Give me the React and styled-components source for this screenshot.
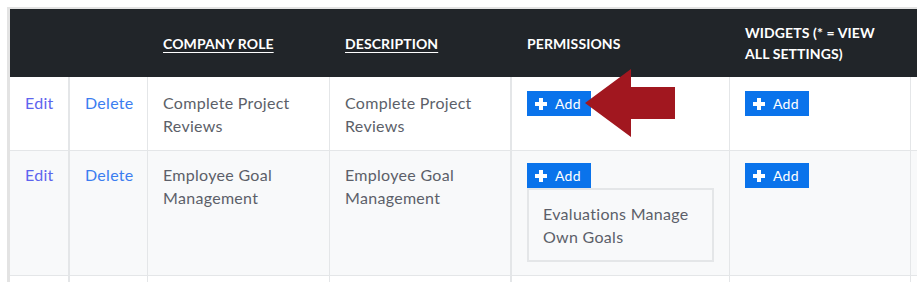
import styled, { createGlobalStyle } from "styled-components";

const GlobalStyle = createGlobalStyle`
  html, body {
    margin: 0;
    background: #ffffff;
  }
  body {
    font-family: "Lato", "Liberation Sans", sans-serif;
  }
`;

const Page = styled.div`
  position: relative;
  width: 917px;
  height: 282px;
  overflow: hidden;
`;

const Frame = styled.div`
  margin: 7px 0 0 7px;
  border-top: 2px solid #e3e3e3;
  border-left: 3px solid #e3e3e3;
  overflow: hidden;
`;

const Table = styled.table`
  width: 1100px;
  table-layout: fixed;
  border-collapse: separate;
  border-spacing: 0;
  font-size: 16px;
  line-height: 23px;
  letter-spacing: 0.3px;
  color: #5c5f69;
`;

const HeadCell = styled.th`
  background: #212529;
  color: #ffffff;
  text-align: left;
  vertical-align: middle;
  padding: 13px 15px;
  font-size: 14px;
  line-height: 21px;
  font-weight: 700;
  letter-spacing: 0.1px;
  text-transform: uppercase;

  a {
    color: #ffffff;
    text-decoration: underline;
    text-underline-offset: 3px;
  }
`;

const Row = styled.tr`
  background: ${(p) => (p.$shaded ? "#f8f9fa" : "#ffffff")};

  &:first-child td {
    padding-top: 14px;
  }
`;

const Cell = styled.td`
  vertical-align: top;
  padding: 12px 15px 13px;
  border-right: ${(p) => (p.$thick ? 2 : 1)}px solid #e4e6e8;
  border-bottom: 1px solid #e4e6e8;
`;

const ActionLink = styled.a`
  color: ${(p) => (p.$edit ? "#5d64ee" : "#3b7df0")};
  text-decoration: none;
  cursor: pointer;
`;

const AddButton = styled.button`
  display: inline-flex;
  align-items: center;
  gap: 8px;
  height: 25px;
  padding: 0 10px 0 8px;
  border: none;
  border-radius: 0;
  background: #0a73eb;
  color: #ffffff;
  font-family: inherit;
  font-size: 14px;
  letter-spacing: 0.3px;
  cursor: pointer;
`;

const PermissionBox = styled.div`
  border: 2px solid #e4e6e8;
  padding: 12px 14px;
`;

const Arrow = styled.svg`
  position: absolute;
  left: 585px;
  top: 69px;
`;

const PlusIcon = () => (
  <svg width="12" height="12" viewBox="0 0 12 12">
    <path d="M4 0h4v4h4v4H8v4H4V8H0V4h4z" fill="#fff" />
  </svg>
);

const Add = () => (
  <AddButton>
    <PlusIcon />
    Add
  </AddButton>
);

const rows = [
  { role: "Complete Project Reviews", desc: "Complete Project Reviews", perms: [] },
  { role: "Employee Goal Management", desc: "Employee Goal Management", perms: ["Evaluations Manage Own Goals"] },
];

export default function App() {
  return (
    <Page>
      <GlobalStyle />
      <Frame>
        <Table>
          <colgroup>
            <col style={{ width: 60 }} />
            <col style={{ width: 78 }} />
            <col style={{ width: 182 }} />
            <col style={{ width: 182 }} />
            <col style={{ width: 218 }} />
            <col style={{ width: 181 }} />
            <col />
          </colgroup>
          <thead>
            <tr>
              <HeadCell />
              <HeadCell />
              <HeadCell><a>Company Role</a></HeadCell>
              <HeadCell><a>Description</a></HeadCell>
              <HeadCell>Permissions</HeadCell>
              <HeadCell>Widgets (* = View All Settings)</HeadCell>
              <HeadCell />
            </tr>
          </thead>
          <tbody>
            {rows.map((r, i) => (
              <Row key={r.role} $shaded={i % 2 === 1}>
                <Cell $thick><ActionLink $edit>Edit</ActionLink></Cell>
                <Cell><ActionLink>Delete</ActionLink></Cell>
                <Cell>{r.role}</Cell>
                <Cell $thick>{r.desc}</Cell>
                <Cell>
                  <Add />
                  {r.perms.map((p) => (
                    <PermissionBox key={p}>{p}</PermissionBox>
                  ))}
                </Cell>
                <Cell><Add /></Cell>
                <Cell />
              </Row>
            ))}
            <Row>
              <Cell $thick>&nbsp;</Cell>
              <Cell>&nbsp;</Cell>
              <Cell>&nbsp;</Cell>
              <Cell $thick>&nbsp;</Cell>
              <Cell>&nbsp;</Cell>
              <Cell>&nbsp;</Cell>
              <Cell />
            </Row>
          </tbody>
        </Table>
      </Frame>
      <Arrow width="90" height="68" viewBox="0 0 90 68">
        <polygon points="0,34 46,0 46,18 90,18 90,50 46,50 46,68" fill="#a1171f" />
      </Arrow>
    </Page>
  );
}
